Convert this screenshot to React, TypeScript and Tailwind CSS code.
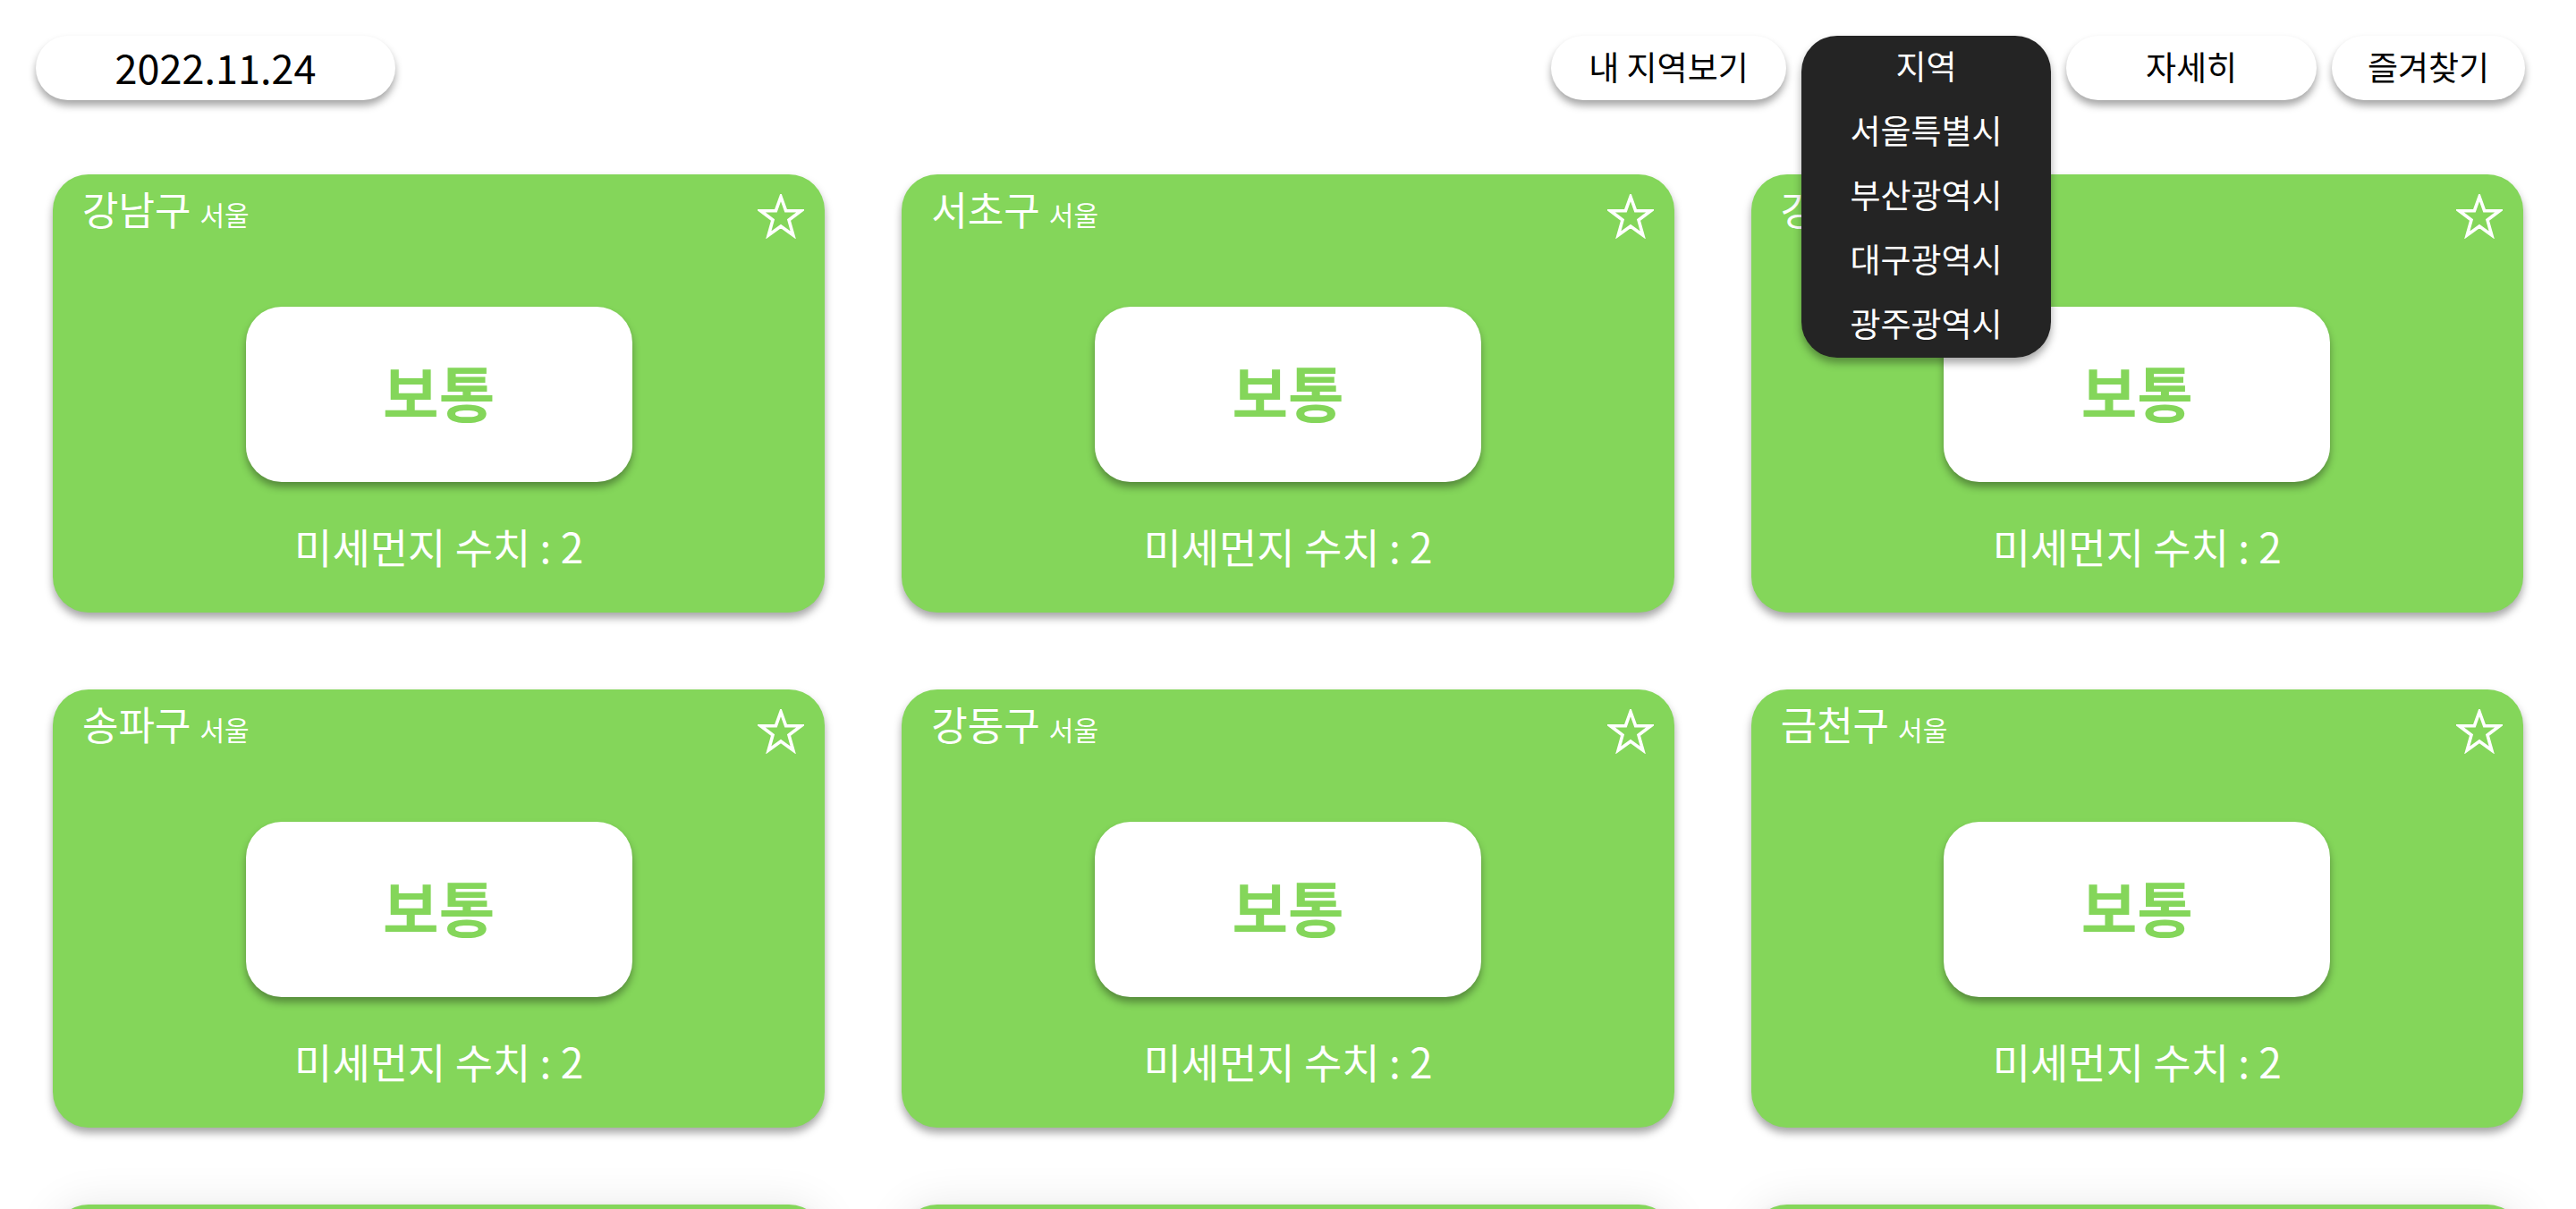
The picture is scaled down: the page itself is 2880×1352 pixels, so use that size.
import React from 'react';

const font = { fontFamily: '"Noto Sans CJK KR", "Noto Sans", sans-serif' };

const regions = ['서울특별시', '부산광역시', '대구광역시', '광주광역시'];

const cards = [
  { gu: '강남구', si: '서울' },
  { gu: '서초구', si: '서울' },
  { gu: '강서구', si: '서울' },
  { gu: '송파구', si: '서울' },
  { gu: '강동구', si: '서울' },
  { gu: '금천구', si: '서울' },
  { gu: '마포구', si: '서울' },
  { gu: '노원구', si: '서울' },
  { gu: '관악구', si: '서울' },
];

function StarOutline() {
  return (
    <svg viewBox="0 0 52 50" className="h-[50px] w-[52px] shrink-0" fill="none">
      <polygon
        points="26,3 31.6,18.6 48.5,18.8 35,29 39.8,46 26,36 12.2,46 17,29 3.5,18.8 20.4,18.6"
        stroke="white"
        strokeWidth="3.6"
        strokeLinejoin="miter"
      />
    </svg>
  );
}

function Pill({ label, width }: { label: string; width: string }) {
  return (
    <button
      className={`flex h-[72px] items-center justify-center rounded-full bg-white pb-[4px] text-[37px] leading-none text-black shadow-[0_6px_8px_rgba(0,0,0,0.35)] ${width}`}
    >
      {label}
    </button>
  );
}

function DustCard({ gu, si, last }: { gu: string; si: string; last?: boolean }) {
  return (
    <div
      className={`flex h-[490px] flex-col items-center rounded-[40px] bg-[#84d65a] ${
        last
          ? 'shadow-[0_6px_10px_rgba(0,0,0,0.35),0_0_50px_0_rgba(0,0,0,0.09)]'
          : 'shadow-[0_6px_10px_rgba(0,0,0,0.35)]'
      }`}
    >
      {/* header: district name + favourite */}
      <div className="flex w-full items-start justify-between pl-[33px] pr-[23px] pt-[12px]">
        <div className="flex items-baseline gap-[10px] text-white">
          <span className="text-[44px] leading-[52px]">{gu}</span>
          <span className="text-[30px] leading-[52px]">{si}</span>
        </div>
        <div className="mt-[10px]">
          <StarOutline />
        </div>
      </div>

      <div className="mt-[76px] flex h-[196px] w-[432px] items-center justify-center rounded-[40px] bg-white pb-[6px] shadow-[0_6px_8px_rgba(0,0,0,0.35)]">
        <span className="text-[68px] font-bold leading-none text-[#84d65a]">보통</span>
      </div>

      <p className="mt-[44px] text-[46px] leading-[54px] text-white">미세먼지 수치 : 2</p>
    </div>
  );
}

export default function App() {
  return (
    <div className="h-[1352px] overflow-hidden bg-white" style={font}>
      <header className="flex items-start justify-between pl-[40px] pr-[57px] pt-[40px]">
        <div className="flex h-[72px] w-[402px] items-center justify-center rounded-full bg-white pb-[4px] text-[45px] leading-none text-black shadow-[0_6px_8px_rgba(0,0,0,0.35)]">
          2022.11.24
        </div>

        <nav className="flex items-start gap-[17px]">
          <Pill label="내 지역보기" width="w-[263px]" />

          {/* open region dropdown */}
          <div className="relative h-[72px] w-[279px]">
            <div className="absolute left-0 top-0 z-10 w-full rounded-[40px] bg-[#242424] shadow-[0_6px_10px_rgba(0,0,0,0.35)]">
              <div className="flex h-[72px] items-center justify-center pb-[5px] text-[37px] leading-none text-white">
                지역
              </div>
              {regions.map((r) => (
                <div
                  key={r}
                  className="flex h-[72px] items-center justify-center pb-[5px] text-[37px] leading-none text-white"
                >
                  {r}
                </div>
              ))}
            </div>
          </div>

          <Pill label="자세히" width="w-[280px]" />
          <Pill label="즐겨찾기" width="w-[216px]" />
        </nav>
      </header>

      <main className="mt-[83px] grid grid-cols-3 gap-[86px] px-[59px]">
        {cards.map((c, i) => (
          <DustCard key={c.gu} gu={c.gu} si={c.si} last={i >= 6} />
        ))}
      </main>
    </div>
  );
}
